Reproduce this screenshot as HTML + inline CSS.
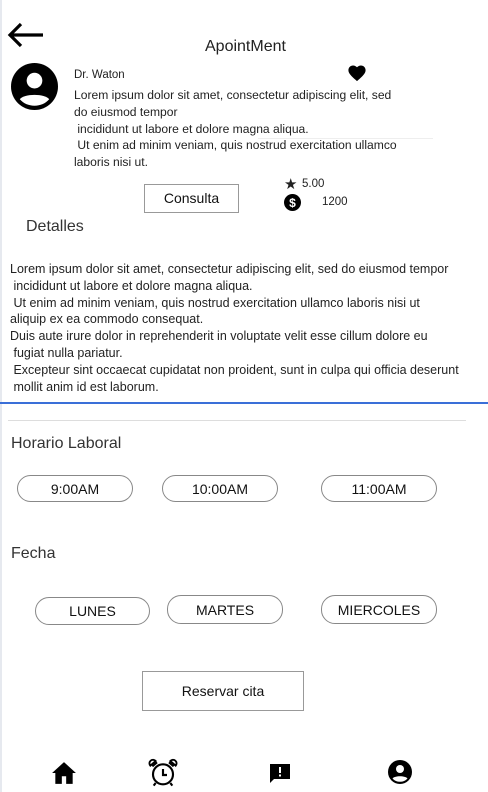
<!DOCTYPE html>
<html><head><style>
body{margin:0;width:488px;height:792px;background:#fff;position:relative;overflow:hidden;font-family:"Liberation Sans",sans-serif;color:#222}
.a{position:absolute}
.t{font-size:11.5px;line-height:16.8px;color:#222;white-space:nowrap}
.pill{position:absolute;height:27px;border:1px solid #888;border-radius:14px;font-size:14px;text-align:center;line-height:27px;color:#111;box-sizing:border-box}
.box{position:absolute;border:1px solid #999;text-align:center;color:#111;font-size:14px;box-sizing:border-box}
</style></head><body>
<div class="a" style="left:0;top:0;width:2px;height:792px;background:#e6e9ef"></div>
<svg class="a" style="left:7px;top:22px" width="38" height="26" viewBox="0 0 38 26"><path d="M3 13H36M14 2L3 13L14 24" stroke="#000" stroke-width="3.2" fill="none"/></svg>
<div class="a" style="left:205px;top:38px;font-size:16px;color:#222">ApointMent</div>
<svg class="a" style="left:11px;top:63px" width="47" height="47" viewBox="0 0 24 24"><circle cx="12" cy="12" r="12" fill="#000"/><circle cx="12" cy="9" r="4" fill="#fff"/><path d="M4.5 18.5c2-3 13-3 15 0c-2 2.2-4.5 3.3-7.5 3.3s-5.5-1.1-7.5-3.3z" fill="#fff"/></svg>
<div class="a t" style="left:74px;top:67px;font-size:11.5px">Dr. Waton</div>
<div class="a t" style="left:74px;top:87px;font-size:12.1px">Lorem ipsum dolor sit amet, consectetur adipiscing elit, sed<br>do eiusmod tempor<br>&nbsp;incididunt ut labore et dolore magna aliqua.<br>&nbsp;Ut enim ad minim veniam, quis nostrud exercitation ullamco<br>laboris nisi ut.</div>
<div class="a" style="left:258px;top:138px;width:175px;height:1px;background:#eee"></div>
<svg class="a" style="left:347px;top:64px" width="20" height="18" viewBox="0 0 24 22"><path d="M12 21L10.5 19.6C5 14.7 1.5 11.5 1.5 7.5 1.5 4.3 4 1.8 7.2 1.8c1.8 0 3.6.9 4.8 2.2 1.2-1.3 3-2.2 4.8-2.2 3.2 0 5.7 2.5 5.7 5.7 0 4-3.5 7.2-9 12.1z" fill="#000"/></svg>
<div class="box" style="left:144px;top:184px;width:95px;height:29px;line-height:27px">Consulta</div>
<div class="a" style="left:284px;top:175px;font-size:15px">★</div>
<div class="a t" style="left:302px;top:176px;font-size:11.5px">5.00</div>
<svg class="a" style="left:284px;top:194px" width="17" height="17" viewBox="0 0 17 17"><circle cx="8.5" cy="8.5" r="8.5" fill="#000"/><text x="8.5" y="13" text-anchor="middle" fill="#fff" font-size="12" font-weight="bold" font-family="Liberation Sans">$</text></svg>
<div class="a t" style="left:322px;top:194px;font-size:11.5px">1200</div>
<div class="a" style="left:26px;top:218px;font-size:16px;color:#333">Detalles</div>
<div class="a t" style="left:10px;top:261px;font-size:12.5px">Lorem ipsum dolor sit amet, consectetur adipiscing elit, sed do eiusmod tempor<br>&nbsp;incididunt ut labore et dolore magna aliqua.<br>&nbsp;Ut enim ad minim veniam, quis nostrud exercitation ullamco laboris nisi ut<br>aliquip ex ea commodo consequat.<br>Duis aute irure dolor in reprehenderit in voluptate velit esse cillum dolore eu<br>&nbsp;fugiat nulla pariatur.<br>&nbsp;Excepteur sint occaecat cupidatat non proident, sunt in culpa qui officia deserunt<br>&nbsp;mollit anim id est laborum.</div>
<div class="a" style="left:0;top:402px;width:488px;height:2px;background:#3a6fd8"></div>
<div class="a" style="left:8px;top:420px;width:458px;height:1px;background:#ddd"></div>
<div class="a" style="left:11px;top:435px;font-size:16px;color:#333">Horario Laboral</div>
<div class="pill" style="left:17px;top:475px;width:116px">9:00AM</div>
<div class="pill" style="left:162px;top:475px;width:116px">10:00AM</div>
<div class="pill" style="left:321px;top:475px;width:116px">11:00AM</div>
<div class="a" style="left:11px;top:545px;font-size:16px;color:#333">Fecha</div>
<div class="pill" style="left:35px;top:597px;width:115px;height:28px;line-height:26px">LUNES</div>
<div class="pill" style="left:167px;top:595px;width:116px;height:29px;line-height:28px">MARTES</div>
<div class="pill" style="left:321px;top:595px;width:116px;height:29px;line-height:28px">MIERCOLES</div>
<div class="box" style="left:142px;top:671px;width:162px;height:40px;line-height:38px">Reservar cita</div>
<svg class="a" style="left:51px;top:761px" width="26" height="24" viewBox="0 0 24 22"><path d="M12 1L1 11h3v10h6v-7h4v7h6V11h3z" fill="#000"/></svg>
<svg class="a" style="left:146px;top:757px" width="34" height="32" viewBox="0 0 24 24"><circle cx="12" cy="13" r="7.5" stroke="#000" stroke-width="1.6" fill="none"/><path d="M12 9v4.5h3M4 7l3.5-3M20 7l-3.5-3M6.5 19.5L5 21.5M17.5 19.5L19 21.5" stroke="#000" stroke-width="1.6" fill="none"/><path d="M2.5 6.5a2.5 2.5 0 0 1 4-3.5zM21.5 6.5a2.5 2.5 0 0 0-4-3.5z" fill="none" stroke="#000" stroke-width="1.4"/></svg>
<svg class="a" style="left:269px;top:763px" width="22" height="22" viewBox="0 0 22 22"><path d="M1 1h20v15H5l-4 4z" fill="#000"/><rect x="10" y="4" width="2" height="6" fill="#fff"/><rect x="10" y="11.5" width="2" height="2" fill="#fff"/></svg>
<svg class="a" style="left:388px;top:760px" width="24" height="24" viewBox="0 0 24 24"><circle cx="12" cy="12" r="12" fill="#000"/><circle cx="12" cy="9" r="4" fill="#fff"/><path d="M4.5 18.5c2-3 13-3 15 0c-2 2.2-4.5 3.3-7.5 3.3s-5.5-1.1-7.5-3.3z" fill="#fff"/></svg>
</body></html>
